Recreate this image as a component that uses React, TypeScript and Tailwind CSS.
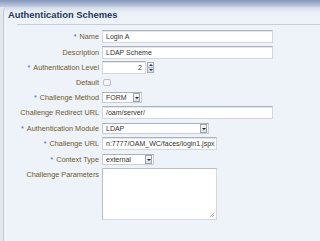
import React from "react";

const inputCls =
  "h-[13px] bg-white border border-[#d3d8de] border-t-[#aab1ba] shadow-[inset_0_1px_0_#e3e6ea] text-[#333] text-[7px] leading-[11px] pl-[3px] overflow-hidden whitespace-nowrap";

function Label({ text, req }: { text: string; req?: boolean }) {
  return (
    <div className="w-[91px] shrink-0 text-right text-[7.3px] leading-[13px] text-[#6f5b2a] whitespace-nowrap">
      {req && <span className="text-[#3f6fae] mr-[3px]">*</span>}
      {text}
    </div>
  );
}

function Row({
  label,
  req,
  children,
  className = "",
}: {
  label: string;
  req?: boolean;
  children: React.ReactNode;
  className?: string;
}) {
  return (
    <div className={"flex items-center h-[13px] " + className}>
      <Label text={label} req={req} />
      <div className="ml-[3px] flex items-center">{children}</div>
    </div>
  );
}

function DropBtn() {
  return (
    <div className="w-[7px] h-[9px] mr-[1px] border border-[#9ea5ae] bg-gradient-to-b from-[#fafbfc] to-[#d9dde2] flex items-center justify-center">
      <div className="w-0 h-0 border-l-[2px] border-r-[2px] border-t-[2px] border-l-transparent border-r-transparent border-t-[#1c1c1c]" />
    </div>
  );
}

function Select({ value, w }: { value: string; w: string }) {
  return (
    <div className={"h-[11px] bg-white border border-[#c9ced5] border-t-[#aab1ba] flex items-center justify-between " + w}>
      <span className="text-[7px] leading-[9px] text-[#333] pl-[3px]">{value}</span>
      <DropBtn />
    </div>
  );
}

export default function App() {
  return (
    <div
      className="w-[320px] h-[241px] overflow-hidden bg-[#e3e8ef]"
      style={{ fontFamily: '"Liberation Sans", Arial, sans-serif' }}
    >
      <div className="h-[7px] bg-gradient-to-b from-[#8498bd] to-[#c3cee0]" />
      <div className="ml-[3px] h-[234px] rounded-tl-[4px] border-l border-[#c2cad5] bg-[linear-gradient(to_bottom,#d3dbe8_0px,#eaeff7_5px,#eef2f9_10px)] pl-[4px]">
        <div className="pt-[2px] text-[9.4px] leading-[11px] font-bold text-[#1b375f] whitespace-nowrap">
          Authentication Schemes
        </div>
        <div className="mt-[4px] ml-[9px] h-px bg-[#c7cfda]" />
        <div className="mt-[5px] flex flex-col">
          <Row label="Name" req>
            <div className={inputCls + " w-[171px]"}>Login A</div>
          </Row>
          <Row label="Description" className="mt-[3px]">
            <div className={inputCls + " w-[171px]"}>LDAP Scheme</div>
          </Row>
          <Row label="Authentication Level" req className="mt-[2px]">
            <div className={inputCls + " w-[44px] text-right pr-[3px]"}>2</div>
            <div className="ml-[1px] w-[7px] h-[11px] border border-[#a4abb4] bg-gradient-to-b from-[#f4f6f8] to-[#d6dbe1] flex flex-col items-center justify-around">
              <div className="w-0 h-0 border-l-[2px] border-r-[2px] border-b-[2px] border-l-transparent border-r-transparent border-b-[#23385a]" />
              <div className="w-[5px] h-px bg-[#b3b9c1]" />
              <div className="w-0 h-0 border-l-[2px] border-r-[2px] border-t-[2px] border-l-transparent border-r-transparent border-t-[#23385a]" />
            </div>
          </Row>
          <Row label="Default" className="mt-[2px]">
            <div className="ml-[1px] w-[8px] h-[7px] rounded-[2px] border border-[#b9c0c9] bg-[#f3f5f8]" />
          </Row>
          <Row label="Challenge Method" req className="mt-[2px]">
            <Select value="FORM" w="w-[40px]" />
          </Row>
          <Row label="Challenge Redirect URL" className="mt-[2px]">
            <div className={inputCls + " w-[171px]"}>/oam/server/</div>
          </Row>
          <Row label="Authentication Module" req className="mt-[3px]">
            <Select value="LDAP" w="w-[107px]" />
          </Row>
          <Row label="Challenge URL" req className="mt-[2px]">
            <div className={inputCls + " w-[115px] pl-[1px]"}>n:7777/OAM_WC/faces/login1.jspx</div>
          </Row>
          <Row label="Context Type" req className="mt-[3px]">
            <Select value="external" w="w-[52px]" />
          </Row>
          <div className="mt-[2px] flex items-start">
            <Label text="Challenge Parameters" />
            <div className="ml-[3px] relative w-[115px] h-[52px] bg-white border border-[#d3d8de] border-t-[#b7bec7] border-l-[#b7bec7]">
              <svg className="absolute right-[1px] bottom-[1px]" width="6" height="6" viewBox="0 0 6 6">
                <path d="M5 1L1 5M5 3L3 5M5 5L5 5" stroke="#9a9fa6" strokeWidth="0.8" />
              </svg>
            </div>
          </div>
        </div>
      </div>
    </div>
  );
}
